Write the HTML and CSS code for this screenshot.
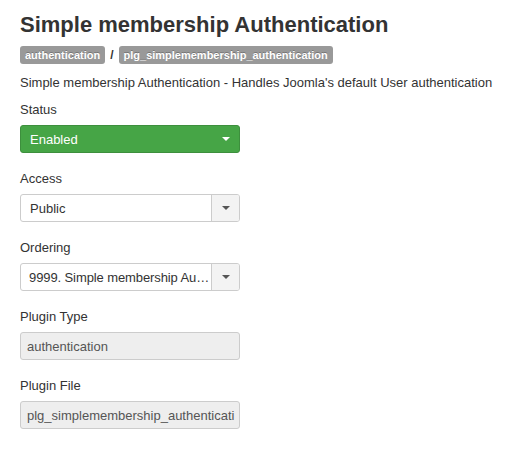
FILE: index.html
```html
<!DOCTYPE html>
<html>
<head>
<meta charset="utf-8">
<link rel="stylesheet" href="styles.css">
</head>
<body>
<div class="page">
  <h2 class="title">Simple membership Authentication</h2>
  <div class="badges">
    <span class="badge">authentication</span>
    <span class="sep">/</span>
    <span class="badge">plg_simplemembership_authentication</span>
  </div>
  <p class="desc">Simple membership Authentication - Handles Joomla's default User authentication</p>

  <div class="group">
    <div class="label">Status</div>
    <div class="select green">
      <span class="value">Enabled</span>
      <span class="caret-wrap"><span class="caret white"></span></span>
    </div>
  </div>

  <div class="group">
    <div class="label">Access</div>
    <div class="select plain">
      <span class="value">Public</span>
      <span class="caret-wrap boxed"><span class="caret"></span></span>
    </div>
  </div>

  <div class="group">
    <div class="label">Ordering</div>
    <div class="select plain">
      <span class="value tight">9999. Simple membership Au…</span>
      <span class="caret-wrap boxed"><span class="caret"></span></span>
    </div>
  </div>

  <div class="group">
    <div class="label">Plugin Type</div>
    <div class="input readonly"><span class="value">authentication</span></div>
  </div>

  <div class="group">
    <div class="label">Plugin File</div>
    <div class="input readonly"><span class="value">plg_simplemembership_authenticati</span></div>
  </div>
</div>
</body>
</html>
```
FILE: styles.css
```css
html, body {
  margin: 0;
  padding: 0;
  background: #fff;
}
body {
  font-family: "Liberation Sans", Arial, sans-serif;
  color: #333;
  font-size: 13px;
}
.page {
  padding: 11px 20px;
}
.title {
  margin: 0;
  font-size: 22px;
  line-height: 28px;
  font-weight: bold;
  color: #333;
}
.badges {
  display: flex;
  align-items: center;
  gap: 5px;
  margin-top: 7px;
}
.badge {
  display: inline-block;
  background: #999;
  color: #fff;
  font-weight: bold;
  font-size: 11px;
  line-height: 14px;
  padding: 2px 5px;
  border-radius: 3px;
  text-shadow: 0 -1px 0 rgba(0,0,0,.25);
}
.sep {
  font-weight: bold;
  font-size: 12px;
  color: #333;
}
.desc {
  margin: 10px 0 0 0;
  line-height: 18px;
}
.group {
  margin-top: 9px;
}
.group + .group {
  margin-top: 17px;
}
.label {
  line-height: 18px;
  margin-bottom: 6px;
}
.select, .input {
  box-sizing: border-box;
  width: 220px;
  height: 28px;
  border-radius: 3px;
  display: flex;
  align-items: center;
  overflow: hidden;
}
.select .value {
  flex: 1;
  min-width: 0;
  padding-left: 9px;
  white-space: nowrap;
}
.select .value.tight {
  padding-left: 8px;
  letter-spacing: -0.1px;
}
.input .value {
  flex: 1;
  padding-left: 6px;
  white-space: nowrap;
  overflow: hidden;
}
.green {
  background: #46a546;
  border: 1px solid #3d8f3d;
  color: #fff;
}
.plain {
  background: #fff;
  border: 1px solid #ccc;
  color: #333;
}
.caret-wrap {
  flex: none;
  width: 27px;
  height: 100%;
  display: flex;
  align-items: center;
  justify-content: center;
}
.caret-wrap.boxed {
  border-left: 1px solid #ccc;
  background: #f3f3f3;
}
.caret {
  width: 0;
  height: 0;
  border-left: 4px solid transparent;
  border-right: 4px solid transparent;
  border-top: 4px solid #555;
}
.caret.white {
  border-top-color: #fff;
}
.readonly {
  background: #eee;
  border: 1px solid #ccc;
  color: #555;
}
```
